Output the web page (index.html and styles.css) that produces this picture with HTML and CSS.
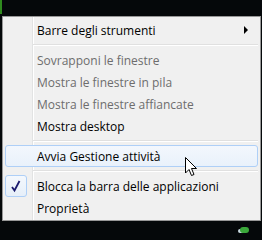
FILE: index.html
```html
<!DOCTYPE html>
<html lang="it">
<head>
    <meta charset="UTF-8">
    <title>Menu barra delle applicazioni</title>
    <link rel="stylesheet" href="styles.css">
</head>
<body>
    <div class="desk">
        <div class="glow"></div>

        <div class="menu">
            <div class="item">
                <span class="label">Barre degli strumenti</span>
                <span class="arrow"></span>
            </div>
            <div class="sep"></div>
            <div class="item disabled"><span class="label">Sovrapponi le finestre</span></div>
            <div class="item disabled"><span class="label">Mostra le finestre in pila</span></div>
            <div class="item disabled"><span class="label">Mostra le finestre affiancate</span></div>
            <div class="item"><span class="label">Mostra desktop</span></div>
            <div class="sep"></div>
            <div class="item hover"><span class="label">Avvia Gestione attività</span></div>
            <div class="sep"></div>
            <div class="item">
                <span class="check">
                    <svg width="14" height="14" viewBox="0 0 14 14">
                        <path d="M3 8 L5.5 11.5 L10.5 2" fill="none" stroke="#1a1a6e" stroke-width="1.8"/>
                    </svg>
                </span>
                <span class="label">Blocca la barra delle applicazioni</span>
            </div>
            <div class="item"><span class="label">Proprietà</span></div>
        </div>

        <!-- puntatore del mouse -->
        <svg class="cursor" width="13" height="20" viewBox="0 0 13 20">
            <path d="M0.5 0.5 L0.5 16 L4 12.5 L6.5 18.5 L9 17.5 L6.5 11.5 L11.5 11.5 Z" fill="#fff" stroke="#000" stroke-width="1"/>
        </svg>

        <div class="tray">
            <span class="tray-icon"></span>
        </div>
    </div>
</body>
</html>
```

FILE: styles.css
```css
body {
    margin: 0;
    padding: 0;
    background-color: #05080a;
    font-family: 'Open Sans', 'Noto Sans', sans-serif;
    font-size: 12px;
}

.desk {
    position: relative;
    width: 262px;
    height: 240px;
    padding: 16px 0 0 2px;
    box-sizing: border-box;
}

.glow {
    position: absolute;
    left: 0;
    top: 0;
    width: 2px;
    height: 14px;
    background-color: #2f8a1e;
}

.menu {
    width: 259px;
    box-sizing: border-box;
    border: 1px solid #979797;
    padding: 2px 0 1px 0;
    background: linear-gradient(to right, #f0f0f0 29px, #e2e3e3 29px, #e2e3e3 30px, #ffffff 30px, #ffffff 31px, #f0f0f0 31px);
}

.item {
    display: flex;
    align-items: center;
    height: 22px;
    margin: 0 2px;
    padding-left: 32px;
    padding-right: 8px;
    box-sizing: border-box;
    color: #000;
    border: 1px solid transparent;
    border-radius: 3px;
}

.item .label {
    flex: 1;
    margin-left: -1px;
}

.item.disabled {
    color: #6d6d6d;
}

.item.hover {
    border-color: #aecff7;
    background: linear-gradient(to bottom, #f3f7fd, #e9f1fb);
}

.arrow {
    width: 0;
    height: 0;
    margin-right: 1px;
    border-top: 4px solid transparent;
    border-bottom: 4px solid transparent;
    border-left: 4px solid #000;
}

.check {
    display: flex;
    align-items: center;
    justify-content: center;
    width: 22px;
    height: 22px;
    box-sizing: border-box;
    margin-left: -33px;
    margin-right: 11px;
    border: 1px solid #aecff7;
    border-radius: 3px;
    background: linear-gradient(to bottom, #f4f8fd, #e6eff9);
}

.sep {
    height: 8px;
    margin-left: 30px;
    margin-right: 2px;
    background: linear-gradient(to bottom, transparent 3px, #e0e0e0 3px, #e0e0e0 4px, #ffffff 4px, #ffffff 5px, transparent 5px);
}

.cursor {
    position: absolute;
    left: 185px;
    top: 157px;
}

.tray {
    position: absolute;
    left: 240px;
    top: 227px;
}

.tray-icon {
    display: block;
    width: 9px;
    height: 6px;
    border-radius: 3px;
    background-color: #3aa83a;
    box-shadow: -3px 1px 0 -1px #c8d8e0;
}
```
